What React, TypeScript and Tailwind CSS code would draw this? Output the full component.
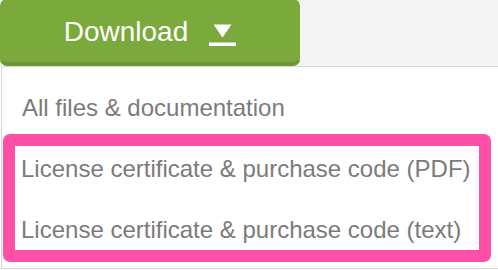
import React from 'react';

function DownloadIcon() {
  return (
    <svg width="27" height="22" viewBox="0 0 27 22" fill="white" aria-hidden="true">
      <polygon points="4.5,0.5 22.5,0.5 13.5,13.5" />
      <rect x="0" y="18.5" width="27" height="3.5" />
    </svg>
  );
}

export default function App() {
  return (
    <div
      className="w-[498px] h-[270px] overflow-hidden bg-white"
      style={{ fontFamily: '"Liberation Sans", Arial, sans-serif' }}
    >
      {/* Top bar with the download button */}
      <div className="h-[67px] bg-[#f4f4f4]">
        <button className="-mt-[1px] flex h-[67px] w-[300px] items-center justify-center gap-[21px] rounded-[7px] border-b-4 border-[#6b9733] bg-[#7aa93c] pt-[2px] text-[28px] leading-[28px] text-white">
          <span>Download</span>
          <span className="mt-[6px]">
            <DownloadIcon />
          </span>
        </button>
      </div>

      {/* Dropdown */}
      <div className="ml-[1px] h-[203px] border-t border-l border-b border-[#d6d6d6] bg-white pl-[1px] pr-[7px] text-[24px] leading-[28px] text-[#7b7b7b]">
        <div className="pt-[27px] pb-[12px] pl-[19px]">All files &amp; documentation</div>

        <div className="rounded-[7px] border-[12px] border-[#ff4fa6] px-[6px] pt-[9px] pb-[6px]">
          <div>License certificate &amp; purchase code (PDF)</div>
          <div className="mt-[33px]">License certificate &amp; purchase code (text)</div>
        </div>
      </div>
    </div>
  );
}
